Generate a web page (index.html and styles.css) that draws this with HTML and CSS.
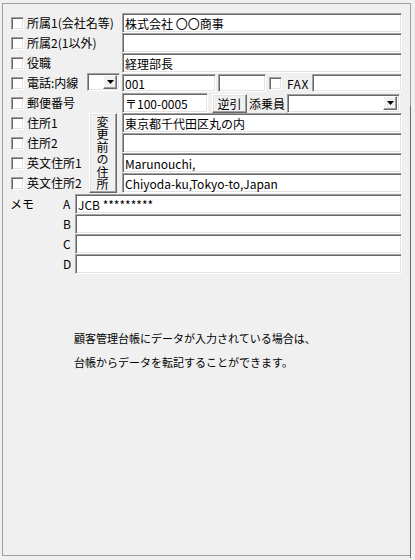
FILE: index.html
```html
<!DOCTYPE html>
<html lang="ja">
  <head>
    <meta charset="UTF-8" />
    <meta name="viewport" content="width=device-width, initial-scale=1.0" />
    <title>顧客情報</title>
    <link rel="stylesheet" href="styles.css">
  </head>
  <body>
    <div class="frame">
      <div class="form">
        <!-- row 1 -->
        <input type="checkbox" class="cb" />
        <span class="lbl span2">所属1(会社名等)</span>
        <input type="text" class="tb main" value="株式会社 〇〇商事" />

        <!-- row 2 -->
        <input type="checkbox" class="cb" />
        <span class="lbl span2">所属2(1以外)</span>
        <input type="text" class="tb main" value="" />

        <!-- row 3 -->
        <input type="checkbox" class="cb" />
        <span class="lbl span2">役職</span>
        <input type="text" class="tb main" value="経理部長" />

        <!-- row 4 : phone -->
        <input type="checkbox" class="cb" />
        <span class="lbl">電話:内線</span>
        <div class="combo small">
          <span class="drop"><svg width="7" height="4" viewBox="0 0 7 4"><polygon points="0,0 7,0 3.5,4" fill="#000"/></svg></span>
        </div>
        <div class="line">
          <input type="text" class="tb tel" value="001" />
          <input type="text" class="tb ext" value="" />
          <input type="checkbox" class="cb fax-cb" />
          <span class="fax">FAX</span>
          <input type="text" class="tb faxno" value="" />
        </div>

        <!-- row 5 : postal -->
        <input type="checkbox" class="cb" />
        <span class="lbl span2">郵便番号</span>
        <div class="line">
          <input type="text" class="tb zip" value="〒100-0005" />
          <button class="btn rev">逆引</button>
          <span class="escort">添乗員</span>
          <div class="combo wide">
            <span class="drop"><svg width="7" height="4" viewBox="0 0 7 4"><polygon points="0,0 7,0 3.5,4" fill="#000"/></svg></span>
          </div>
        </div>

        <!-- rows 6-9 : address -->
        <input type="checkbox" class="cb" />
        <span class="lbl">住所1</span>
        <button class="btn vbtn">変更前の住所</button>
        <input type="text" class="tb main" value="東京都千代田区丸の内" />

        <input type="checkbox" class="cb" />
        <span class="lbl">住所2</span>
        <input type="text" class="tb main" value="" />

        <input type="checkbox" class="cb" />
        <span class="lbl">英文住所1</span>
        <input type="text" class="tb main" value="Marunouchi," />

        <input type="checkbox" class="cb" />
        <span class="lbl">英文住所2</span>
        <input type="text" class="tb main" value="Chiyoda-ku,Tokyo-to,Japan" />
      </div>

      <div class="memo">
        <span class="memo-title">メモ</span>
        <span class="key">A</span>
        <input type="text" class="tb" value="JCB *********" />
        <span class="key">B</span>
        <input type="text" class="tb" value="" />
        <span class="key">C</span>
        <input type="text" class="tb" value="" />
        <span class="key">D</span>
        <input type="text" class="tb" value="" />
      </div>

      <p class="note">
        顧客管理台帳にデータが入力されている場合は、<br>
        台帳からデータを転記することができます。
      </p>
    </div>
    <div class="edge"></div>
  </body>
</html>
```

FILE: styles.css
```css
body {
  margin: 0;
  background: #f0f0f0;
  font-family: "Noto Sans CJK JP", sans-serif;
  font-size: 12px;
  color: #000;
}
.frame {
  box-sizing: border-box;
  width: 409px;
  height: 553px;
  margin: 3px 0 0 2px;
  padding: 9px 0 0 8px;
  border: 1px solid #a0a0a0;
}
.edge {
  position: absolute;
  left: 410px;
  top: 106px;
  width: 1px;
  height: 452px;
  background: #696969;
}

/* top form */
.form {
  display: grid;
  grid-template-columns: 16px 59px 36px 280px;
  grid-auto-rows: 20px;
}
.lbl {
  grid-column: 2;
  line-height: 20px;
  white-space: nowrap;
}
.span2 {
  grid-column: 2 / 4;
}
.main,
.line {
  grid-column: 4;
}
.line {
  display: flex;
  align-items: center;
}

/* controls */
.cb {
  appearance: none;
  box-sizing: border-box;
  width: 13px;
  height: 13px;
  margin: 0;
  align-self: center;
  background: #fff;
  border: 1px solid;
  border-color: #a0a0a0 #fff #fff #a0a0a0;
  box-shadow: inset 1px 1px #696969, inset -1px -1px #e3e3e3;
}
.tb {
  box-sizing: border-box;
  height: 20px;
  margin: 0;
  padding: 0 2px;
  background: #fff;
  border: 1px solid;
  border-color: #a0a0a0 #fff #fff #a0a0a0;
  box-shadow: inset 1px 1px #696969, inset -1px -1px #e3e3e3;
  font: 12px "Noto Sans CJK JP", sans-serif;
  color: #000;
  outline: none;
}
.btn {
  box-sizing: border-box;
  margin: 0;
  padding: 0;
  background: #f0f0f0;
  border: 1px solid;
  border-color: #fff #696969 #696969 #fff;
  box-shadow: inset -1px -1px #a0a0a0, inset 1px 1px #e3e3e3;
  font: 12px "Noto Sans CJK JP", sans-serif;
  color: #000;
}
.combo {
  box-sizing: border-box;
  height: 18px;
  display: flex;
  justify-content: flex-end;
  align-items: center;
  padding-right: 2px;
  background: #fff;
  border: 1px solid;
  border-color: #a0a0a0 #fff #fff #a0a0a0;
  box-shadow: inset 1px 1px #696969, inset -1px -1px #e3e3e3;
}
.drop {
  box-sizing: border-box;
  width: 14px;
  height: 14px;
  display: flex;
  justify-content: center;
  align-items: center;
  background: #f0f0f0;
  border: 1px solid;
  border-color: #fff #696969 #696969 #fff;
  box-shadow: inset -1px -1px #a0a0a0;
}

/* phone row */
.combo.small {
  grid-column: 3;
  width: 33px;
  margin-left: 1px;
  align-self: start;
}
.tel {
  width: 94px;
  height: 18px;
}
.ext {
  width: 48px;
  height: 18px;
  margin-left: 2px;
}
.fax-cb {
  margin-left: 3px;
}
.fax {
  margin-left: 5px;
  width: 25px;
  letter-spacing: 0.5px;
}
.faxno {
  width: 90px;
  height: 18px;
}

/* postal row */
.zip {
  width: 86px;
}
.rev {
  width: 35px;
  height: 19px;
  margin-left: 4px;
}
.escort {
  margin-left: 2px;
  width: 38px;
}
.combo.wide {
  width: 113px;
  height: 19px;
}

/* address button */
.vbtn {
  grid-column: 3;
  grid-row: 6 / 10;
  width: 28px;
  margin-left: 3px;
  writing-mode: vertical-rl;
  letter-spacing: 0.5px;
  line-height: 28px;
}

/* memo */
.memo {
  display: grid;
  grid-template-columns: 52px 12px 327px;
  grid-auto-rows: 20px;
  margin-top: 1px;
}
.memo-title {
  grid-row: 1;
  grid-column: 1;
  margin-left: -1px;
  line-height: 20px;
}
.key {
  grid-column: 2;
  line-height: 20px;
}
.memo .tb {
  grid-column: 3;
}

.note {
  margin: 52px 0 0 63px;
  font-size: 11px;
  line-height: 24px;
}
```
